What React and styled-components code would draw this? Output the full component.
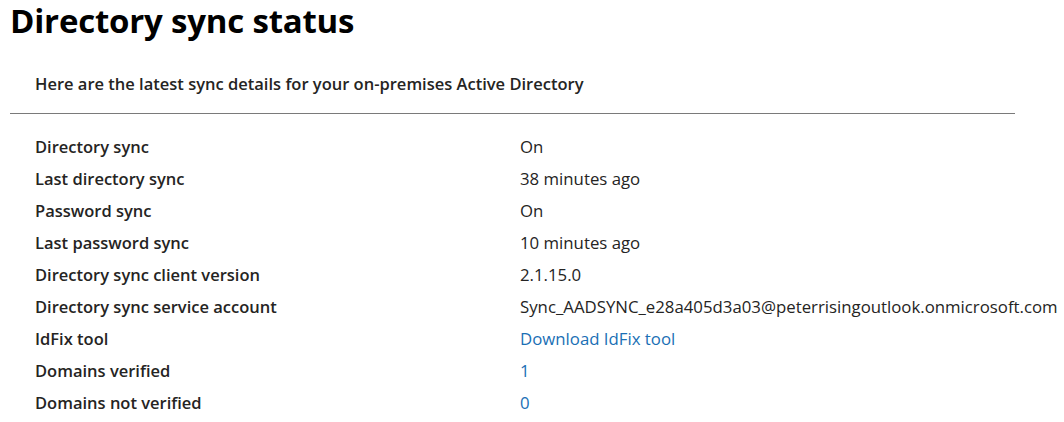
import React from "react";
import styled, { createGlobalStyle } from "styled-components";

const GlobalStyle = createGlobalStyle`
  body {
    margin: 0;
    background: #ffffff;
    font-family: "Open Sans", "Noto Sans", sans-serif;
    color: #201f1e;
  }
`;

const rows = [
  { label: "Directory sync", value: "On" },
  { label: "Last directory sync", value: "38 minutes ago" },
  { label: "Password sync", value: "On" },
  { label: "Last password sync", value: "10 minutes ago" },
  { label: "Directory sync client version", value: "2.1.15.0" },
  {
    label: "Directory sync service account",
    value: "Sync_AADSYNC_e28a405d3a03@peterrisingoutlook.onmicrosoft.com",
  },
  { label: "IdFix tool", value: "Download IdFix tool", link: true },
  { label: "Domains verified", value: "1", link: true },
  { label: "Domains not verified", value: "0", link: true },
];

function App() {
  return (
    <>
      <GlobalStyle />
      <Page>
        <Title>Directory sync status</Title>
        <Intro>Here are the latest sync details for your on-premises Active Directory</Intro>
        <Divider />
        <Details>
          {rows.map((r) => (
            <Row key={r.label}>
              <Label>{r.label}</Label>
              <Value $link={r.link}>{r.value}</Value>
            </Row>
          ))}
        </Details>
      </Page>
    </>
  );
}

export default App;

const Page = styled.div`
  width: 1005px;
  padding: 0 0 0 10px;
`;

const Title = styled.h1`
  margin: 0;
  font-size: 33px;
  font-weight: 700;
  line-height: 42px;
  color: #000;
  letter-spacing: -0.2px;
`;

const Intro = styled.p`
  margin: 0;
  padding: 31px 0 0 25px;
  font-size: 16.5px;
  font-weight: 600;
  line-height: 22px;
  color: #252423;
`;

const Divider = styled.hr`
  margin: 18px 0 0;
  border: 0;
  border-top: 1px solid #7a7a7a;
`;

const Details = styled.div`
  display: flex;
  flex-direction: column;
  padding: 16px 0 0 25px;
`;

const Row = styled.div`
  display: grid;
  grid-template-columns: 485px auto;
  height: 32px;
  align-items: center;
  white-space: nowrap;
`;

const Label = styled.span`
  font-size: 16.5px;
  font-weight: 600;
  color: #252423;
`;

const Value = styled.span`
  font-size: 16.8px;
  color: ${(p) => (p.$link ? "#1a6fb5" : "#252423")};
`;
